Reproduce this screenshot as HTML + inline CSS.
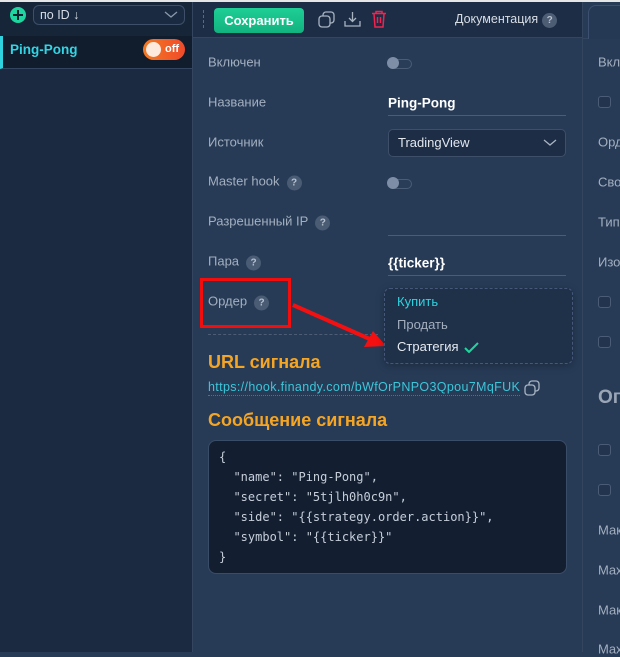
<!DOCTYPE html>
<html><head><meta charset="utf-8"><style>
*{margin:0;padding:0;box-sizing:border-box}
body{width:620px;height:652px;overflow:hidden;background:#273b57;font-family:"Liberation Sans","DejaVu Sans",sans-serif;position:relative;color:#aab6c6}
.a{position:absolute}
.lbl{position:absolute;left:208px;font-size:13px;color:#a3afbf;transform:translateY(-50%)}
.q{display:inline-block;width:15px;height:15px;border-radius:50%;background:#4a5b74;color:#b7c1cf;font-size:10px;font-weight:bold;text-align:center;line-height:15px;margin-left:7px;vertical-align:0}
.tg{position:absolute;left:387px;width:24px;height:10px}
.tg:before{content:"";position:absolute;left:4px;top:1px;width:19px;height:8px;border-radius:5px;border:1px solid #4a5c76;background:#2a3d58}
.tg:after{content:"";position:absolute;left:0;top:-1px;width:12px;height:12px;border-radius:50%;background:#7d8ea6}
.ul{position:absolute;left:388px;width:178px;height:1px;background:#4a5c76}
.val{position:absolute;left:388px;font-weight:bold;color:#fff;font-size:13.5px;transform:translateY(-50%)}
.rl{position:absolute;left:598px;font-size:13px;color:#a3afbf;transform:translateY(-50%)}
.cb{position:absolute;left:598px;width:13px;height:12px;border:1px solid #4a5c76;border-radius:3px;background:#22344e}
pre{font-family:"DejaVu Sans Mono","Liberation Mono",monospace;font-size:12px;line-height:20px;color:#c5ced9}
</style></head><body>
<div class="a" style="left:0;top:0;width:620px;height:2px;background:#e6e6e6"></div>
<div class="a" style="left:0;top:2px;width:193px;height:650px;background:#1b2a40;border-right:1px solid #34465f"></div>
<div class="a" style="left:0;top:2px;width:192px;height:34px;background:#172538"></div>
<div class="a" style="left:10px;top:7px;width:16px;height:16px;border-radius:50%;background:#1ed6a0"><div class="a" style="left:3px;top:7px;width:10px;height:2px;background:#10202f"></div><div class="a" style="left:7px;top:3px;width:2px;height:10px;background:#10202f"></div></div>
<div class="a" style="left:33px;top:5px;width:152px;height:20px;border:1px solid #3d4f69;border-radius:6px;background:#1a2a40;color:#d7dde6;font-size:12.5px;line-height:18px;padding-left:6px">по ID ↓</div>
<svg class="a" style="left:164px;top:11px" width="14" height="8"><path d="M1 1l6 5 6-5" stroke="#8b98aa" fill="none" stroke-width="1.3"/></svg>
<div class="a" style="left:0;top:36px;width:192px;height:33px;background:#111c2c;border-left:3px solid #2fd3e0;border-bottom:1px solid #34465f"></div>
<div class="a" style="left:10px;top:41px;font-size:13.5px;font-weight:bold;color:#33d5e4;line-height:18px">Ping-Pong</div>
<div class="a" style="left:143px;top:39px;width:42px;height:21px;border-radius:11px;background:linear-gradient(90deg,#f47a22,#f04a2a)"><div class="a" style="left:3px;top:3px;width:15px;height:15px;border-radius:50%;background:#fde9dd"></div><div class="a" style="left:22px;top:0;font-size:11px;font-weight:bold;color:#fff;line-height:21px">off</div></div>
<div class="a" style="left:193px;top:2px;width:389px;height:36px;background:#1d2d45;border-bottom:1px solid #34465f"></div>
<div class="a" style="left:203px;top:10px;width:1px;height:18px;border-left:1px dashed #5a6a80"></div>
<div class="a" style="left:214px;top:8px;width:90px;height:25px;border-radius:4px;background:linear-gradient(180deg,#1ecf95,#12b27f);color:#fff;font-size:13px;font-weight:bold;text-align:center;line-height:25px">Сохранить</div>
<svg class="a" style="left:318px;top:11px" width="18" height="18" fill="none" stroke="#a9b4c3" stroke-width="1.3"><rect x="1" y="5" width="11" height="11" rx="3"/><path d="M5 5V4a3 3 0 0 1 3-3h5a3 3 0 0 1 3 3v5a3 3 0 0 1-3 3h-1"/></svg>
<svg class="a" style="left:344px;top:11px" width="17" height="16" fill="none" stroke="#a9b4c3" stroke-width="1.3"><path d="M8.5 1v9M5 7l3.5 3.5L12 7M1 10v5h15v-5"/></svg>
<svg class="a" style="left:371px;top:10px" width="16" height="18" fill="none" stroke="#f0244f" stroke-width="1.5"><path d="M1 3.5h14M5 3.5V1.5h6v2M3 4l1 13h8l1-13M6.5 7v6M9.5 7v6"/></svg>
<div class="a" style="left:455px;top:12px;font-size:12.5px;color:#d8dee6">Документация<span class="q" style="background:#4d5d74;margin-left:4px">?</span></div>
<div class="a" style="left:582px;top:2px;width:1px;height:650px;background:#34465f"></div>
<div class="a" style="left:588px;top:5px;width:40px;height:34px;border:1px solid #3d5070;border-bottom:none;border-radius:8px 0 0 0;background:#263954"></div>
<div class="a" style="left:582px;top:38px;width:6px;height:1px;background:#34465f"></div>
<div class="lbl" style="top:62px">Включен</div><div class="tg" style="top:58px"></div>
<div class="lbl" style="top:102px">Название</div><div class="val" style="top:103px">Ping-Pong</div><div class="ul" style="top:115px"></div>
<div class="lbl" style="top:142px">Источник</div>
<div class="a" style="left:388px;top:129px;width:178px;height:28px;border:1px solid #3d4f69;border-radius:5px;background:#1d2d45;color:#e2e7ee;font-size:13px;line-height:26px;padding-left:9px">TradingView</div>
<svg class="a" style="left:543px;top:139px" width="14" height="8"><path d="M1 1l6 5 6-5" stroke="#a9b4c3" fill="none" stroke-width="1.3"/></svg>
<div class="lbl" style="top:182px">Master hook<span class="q">?</span></div><div class="tg" style="top:178px"></div>
<div class="lbl" style="top:222px">Разрешенный IP<span class="q">?</span></div><div class="ul" style="top:235px"></div>
<div class="lbl" style="top:262px">Пара<span class="q">?</span></div><div class="val" style="top:263px">{{ticker}}</div><div class="ul" style="top:275px"></div>
<div class="lbl" style="top:302px">Ордер<span class="q">?</span></div>
<div class="a" style="left:208px;top:334px;width:170px;border-top:1px dashed #4c5d75"></div>
<div class="a" style="left:200px;top:278px;width:91px;height:50px;border:3px solid #f40d0d"></div>
<svg class="a" style="left:290px;top:298px" width="100" height="52"><path d="M3 7L82 42" stroke="#f41010" stroke-width="4"/><path d="M96 48L74 49L83 33Z" fill="#f41010"/></svg>
<div class="a" style="left:384px;top:288px;width:189px;height:76px;border:1px dashed #46587a;border-radius:6px;background:#1f3049;box-shadow:0 2px 8px rgba(0,0,0,.25)"></div>
<div class="a" style="left:397px;top:294px;font-size:13px;color:#2fd3e0">Купить</div>
<div class="a" style="left:397px;top:317px;font-size:13px;color:#a3afbf">Продать</div>
<div class="a" style="left:397px;top:339px;font-size:13px;color:#e6ebf1">Стратегия</div>
<svg class="a" style="left:464px;top:341px" width="16" height="12"><path d="M1 7l4 4 9-9" stroke="#1fd69e" stroke-width="2" fill="none"/></svg>
<div class="a" style="left:208px;top:352px;font-size:18px;font-weight:bold;color:#f5a524">URL сигнала</div>
<div class="a" style="left:208px;top:380px;font-size:12.5px;color:#3cc6d8;border-bottom:1px dotted #5a6d85;padding-bottom:1px;letter-spacing:0.35px">https://hook.finandy.com/bWfOrPNPO3Qpou7MqFUK</div>
<svg class="a" style="left:524px;top:380px" width="16" height="16" fill="none" stroke="#a9b4c3" stroke-width="1.3"><rect x="1" y="5" width="10" height="10" rx="3"/><path d="M5 5V4a3 3 0 0 1 3-3h4a3 3 0 0 1 3 3v4a3 3 0 0 1-3 3h-1"/></svg>
<div class="a" style="left:208px;top:410px;font-size:18px;font-weight:bold;color:#f5a524">Сообщение сигнала</div>
<div class="a" style="left:208px;top:440px;width:359px;height:134px;background:#131f31;border:1px solid #3a4d68;border-radius:8px;padding:6px 0 0 10px"><pre>{
  "name": "Ping-Pong",
  "secret": "5tjlh0h0c9n",
  "side": "{{strategy.order.action}}",
  "symbol": "{{ticker}}"
}</pre></div>
<div class="rl" style="top:62px">Вкл</div>
<div class="cb" style="top:96px"></div>
<div class="rl" style="top:142px">Орд</div>
<div class="rl" style="top:182px">Сво</div>
<div class="rl" style="top:222px">Тип</div>
<div class="rl" style="top:262px">Изо</div>
<div class="cb" style="top:296px"></div>
<div class="cb" style="top:336px"></div>
<div class="rl" style="top:398px;font-size:19px;font-weight:bold;color:#9aa6b6">Ог</div>
<div class="cb" style="top:444px"></div>
<div class="cb" style="top:484px"></div>
<div class="rl" style="top:530px">Мак</div>
<div class="rl" style="top:570px">Max</div>
<div class="rl" style="top:610px">Мак</div>
<div class="rl" style="top:649px">Max</div>
</body></html>
